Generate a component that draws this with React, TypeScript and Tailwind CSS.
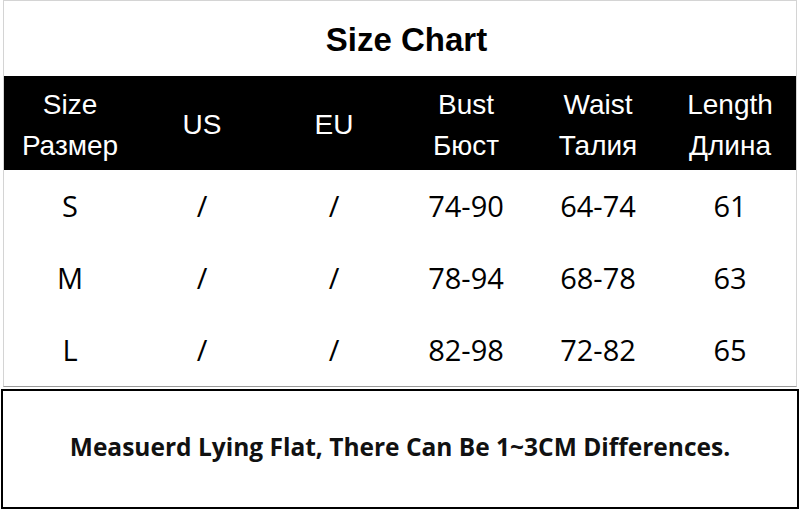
const heads = [
  ["Size", "Размер"],
  ["US"],
  ["EU"],
  ["Bust", "Бюст"],
  ["Waist", "Талия"],
  ["Length", "Длина"],
];

const rows = [
  ["S", "/", "/", "74-90", "64-74", "61"],
  ["M", "/", "/", "78-94", "68-78", "63"],
  ["L", "/", "/", "82-98", "72-82", "65"],
];

const App = () => {
  return (
    <div className="w-[800px] h-[522px] bg-white flex flex-col">
      {/* Chart */}
      <div className="mx-[3px] border-x border-t border-[#d4d4d4] border-b border-b-[#9a9a9a]">
        <div className="h-[75px] flex items-center justify-center pl-[13px] pt-[3px] font-['Liberation_Sans',Arial,sans-serif] font-bold text-[33px] text-black">
          Size Chart
        </div>

        <div className="h-[94px] bg-black grid grid-cols-6 font-['Liberation_Sans',Arial,sans-serif] text-[28px] leading-[41px] text-white">
          {heads.map((h, i) => (
            <div key={i} className="flex flex-col items-center justify-center pt-[3px]">
              {h.map((t) => (
                <span key={t}>{t}</span>
              ))}
            </div>
          ))}
        </div>

        {rows.map((r, i) => (
          <div key={i} className="h-[72px] grid grid-cols-6 font-['Open_Sans',sans-serif] text-[29px] text-black">
            {r.map((c, j) => (
              <div key={j} className="flex items-center justify-center">
                {c}
              </div>
            ))}
          </div>
        ))}
      </div>

      {/* Note */}
      <div className="h-[120px] mt-[2px] mx-[1px] border-2 border-black flex items-center justify-center pb-[4px] font-['Open_Sans',sans-serif] font-bold text-[24.5px] text-[#111]">
        Measuerd Lying Flat, There Can Be 1~3CM Differences.
      </div>
    </div>
  );
};

export default App;
